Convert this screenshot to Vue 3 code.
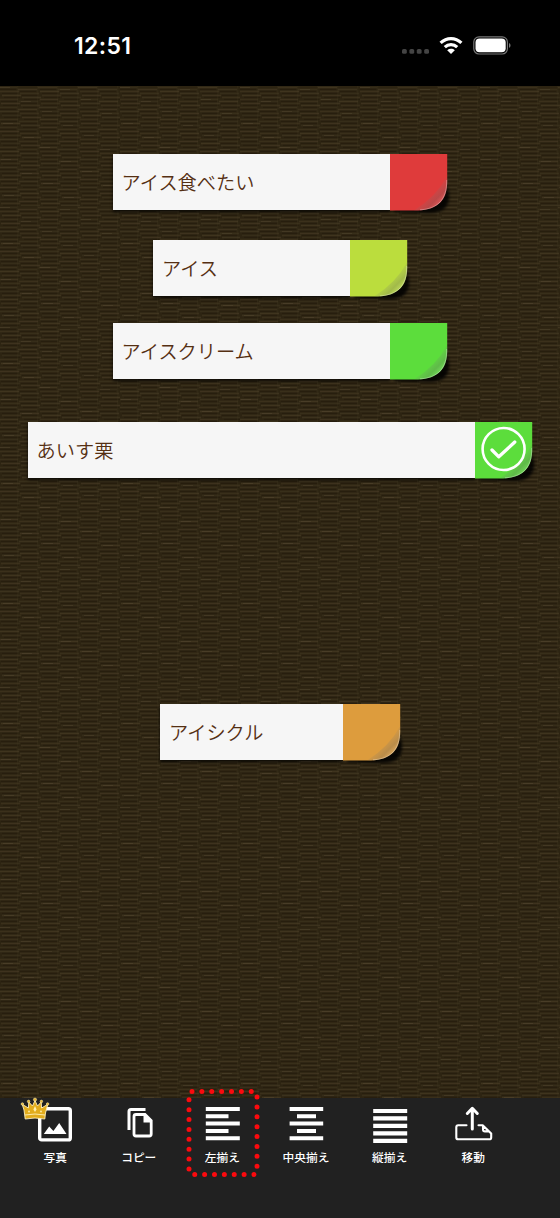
<script setup>
const notes = [
  { text: 'アイス食べたい', x: 112.6, y: 154, w: 334.6, color: '#df3b3b' },
  { text: 'アイス', x: 153, y: 239.5, w: 254, color: '#bbdd3d' },
  { text: 'アイスクリーム', x: 112.6, y: 322.8, w: 334.6, color: '#5cdd3c' },
  { text: 'あいす栗', x: 27.6, y: 421.8, w: 504.6, color: '#5cdd3c', checked: true },
  { text: 'アイシクル', x: 160, y: 703.6, w: 240, color: '#dd9c3d' },
]
const place = (n) => ({ left: n.x + 'px', top: n.y + 'px', width: n.w + 'px' })

const tools = [
  { id: 'photo', label: '写真' },
  { id: 'copy', label: 'コピー' },
  { id: 'left', label: '左揃え', active: true },
  { id: 'center', label: '中央揃え' },
  { id: 'justify', label: '縦揃え' },
  { id: 'move', label: '移動' },
]

// Strands of the woven mat: each 20px column is offset from its neighbour.
const strands = []
const glints = []
for (let c = 0; c < 6; c++) {
  for (let r = 0; r < 30; r++) {
    const x = c * 20 + ((r * 7) % 5) - 2
    const y = r * 4 + (c % 2) * 2
    strands.push({ x, y, o: 0.5 + ((r * 3 + c * 5) % 7) * 0.07 })
    if ((r * 5 + c * 3) % 9 === 0) glints.push({ x: x + 2, y: y + 1 })
  }
}
</script>

<template>
  <div class="screen">
    <header class="status">
      <span class="time">12:51</span>
      <div class="indicators">
        <svg class="dots" width="28" height="5" viewBox="0 0 28 5"><rect v-for="i in 4" :key="i" :x="(i - 1) * 7.4" y="0" width="4.8" height="4.8" rx="1.6" fill="#444" /></svg>
        <svg class="wifi" width="24" height="19" viewBox="0 0 24 19">
          <path d="M1.6 6.8C7.6 1.1 16.4 1.1 22.4 6.8M5.8 11.1C9.4 7.7 14.6 7.7 18.2 11.1" fill="none" stroke="#fff" stroke-width="3.2" />
          <path d="M12 18L8.2 14.2C10.4 12.4 13.6 12.4 15.8 14.2Z" fill="#fff" />
        </svg>
        <svg class="battery" width="38" height="19" viewBox="0 0 38 19">
          <rect x=".8" y=".8" width="33.6" height="17.2" rx="5.2" fill="none" stroke="#777" stroke-width="1.2" />
          <rect x="2.5" y="2.6" width="30.2" height="13.6" rx="4" fill="#fff" />
          <path d="M36 7c2 .8 2 4 0 4.8z" fill="#777" />
        </svg>
      </div>
    </header>

    <main class="board">
      <svg class="mat" width="560" height="1013">
        <defs>
          <pattern id="weave" width="120" height="120" patternUnits="userSpaceOnUse">
            <rect width="120" height="120" fill="#2d2412" />
            <path v-for="(s, i) in strands" :key="'s' + i" :d="`M${s.x} ${s.y + 1.5}h19`" stroke="#40351f" stroke-width="1.5" :opacity="s.o" />
            <path v-for="(s, i) in strands" :key="'d' + i" :d="`M${s.x + 2} ${s.y + 3.3}h16`" stroke="#21180a" stroke-width="1.1" opacity=".65" />
            <path v-for="(g, i) in glints" :key="'g' + i" :d="`M${g.x} ${g.y + .5}h10`" stroke="#5a4c34" stroke-width="1" opacity=".35" />
            <rect v-for="i in 6" :key="'c' + i" :x="i * 20 - 3" y="0" width="1.2" height="120" fill="#4a3e28" opacity=".18" />
          </pattern>
        </defs>
        <rect width="560" height="1013" fill="url(#weave)" />
      </svg>
    </main>

    <article v-for="(n, i) in notes" :key="n.text" class="note" :style="place(n)">
      <div class="paper">{{ n.text }}</div>
      <svg class="curl" width="70" height="70" viewBox="0 0 70 70">
        <defs>
          <linearGradient :id="'fold' + i" gradientUnits="userSpaceOnUse" x1="35" y1="34" x2="51" y2="50">
            <stop offset="0" stop-color="#777" stop-opacity="0" />
            <stop offset=".4" stop-color="#777" stop-opacity=".14" />
            <stop offset=".7" stop-color="#666" stop-opacity=".3" />
            <stop offset=".86" stop-color="#999" stop-opacity=".24" />
            <stop offset="1" stop-color="#ddd" stop-opacity=".3" />
          </linearGradient>
        </defs>
        <path class="shade" d="M4 53H33C47 52 54 46 57 31L59 40C60 53 53 59 39 59L4 58Z" />
        <path d="M0 0H57.2V28C57 46 48 55.6 28 56.4H0Z" :fill="n.color" />
        <path d="M57.2 22V28C57 46 48 55.6 28 56.4H24Q46 43 57.2 22Z" :fill="`url(#fold${i})`" />
        <path d="M56.7 26V28C56.5 45.5 47.6 55 30 55.8" fill="none" stroke="#fff" stroke-opacity=".3" stroke-width="1" />
        <g v-if="n.checked" fill="none" stroke="#fff">
          <circle cx="28.6" cy="27" r="21" stroke-width="2.6" />
          <path d="M17 28L23.8 34.8L39.8 20" stroke-width="3.3" stroke-linecap="round" stroke-linejoin="round" />
        </g>
      </svg>
    </article>

    <nav class="toolbar">
      <div v-for="t in tools" :key="t.id" class="tool">
        <svg class="icon" width="40" height="40" viewBox="0 0 40 40">
          <g v-if="t.id === 'photo'">
            <rect x="4.7" y="4.7" width="30.6" height="31.2" rx="2" fill="none" stroke="#fff" stroke-width="3.4" />
            <path d="M8.8 30L14.2 22.5L18.4 27L24.2 19L31.5 30Z" fill="#fff" />
          </g>
          <g v-else-if="t.id === 'copy'">
            <path d="M10 26V7.5Q10 5.5 12 5.5H26.5" fill="none" stroke="#fff" stroke-width="3" />
            <path d="M17 10.5H26L32.2 16.7V30Q32.2 32 30.2 32H17Q15 32 15 30V12.5Q15 10.5 17 10.5Z" fill="none" stroke="#fff" stroke-width="2.8" />
            <path d="M24.5 10V18.5H33Z" fill="#fff" />
          </g>
          <path v-else-if="t.id === 'left'" d="M3.8 5H37.8M3.8 12.2H26.5M3.8 19.6H37.8M3.8 26.9H26.5M3.8 34.2H37.8" stroke="#fff" stroke-width="4" />
          <path v-else-if="t.id === 'center'" d="M3.6 5H37.2M11 12.2H30M3.6 19.6H37.2M11 26.9H30M3.6 34.2H37.2" stroke="#fff" stroke-width="4" />
          <path v-else-if="t.id === 'justify'" d="M3.2 7H37.2M3.2 14.4H37.2M3.2 21.9H37.2M3.2 29.4H37.2M3.2 36.9H37.2" stroke="#fff" stroke-width="4.2" />
          <g v-else fill="none" stroke="#fff" stroke-width="2.1" stroke-linecap="round" stroke-linejoin="round">
            <path d="M13.5 21.3H5.2Q3.3 21.3 3.3 23.3V33.5Q3.3 35.3 5.2 35.3H36.2Q38.2 35.3 38.2 33.4V29.5L29.7 21.3H25.5M30 21.8V25.5Q30 27.4 32 27.4H35.8" />
            <path d="M19.3 25V5M14.3 9.5L19.3 4.3L24.3 9.5" stroke-width="3" />
          </g>
        </svg>
        <span class="label">{{ t.label }}</span>
        <svg v-if="t.id === 'photo'" class="crown" width="30" height="24" viewBox="0 0 30 24">
          <path d="M4 13L2.2 7.3L8.4 11L8.8 5L12.5 9L15 3.5L17.5 9L21.2 5L21.6 11L27.8 7.3L25.5 16L24.8 22Q15 20 5.2 22Z" fill="#e2ac1c" stroke="#fff1bd" stroke-width=".9" stroke-linejoin="round" />
          <g fill="#e5b633" stroke="#fff0b8" stroke-width=".5"><circle cx="2.4" cy="7" r="1.3" /><circle cx="8.6" cy="4.4" r="1.3" /><circle cx="15" cy="2.6" r="1.6" /><circle cx="21.4" cy="4.4" r="1.3" /><circle cx="27.6" cy="7" r="1.3" /></g>
          <path d="M5 18Q15 16 25 18" fill="none" stroke="#fff2ba" stroke-width=".9" />
          <path d="M15 9L16.6 12.5L15 15L13.4 12.5Z" fill="#fff0ab" /><circle cx="9" cy="14.5" r=".9" fill="#fff0ab" /><circle cx="21" cy="14.5" r=".9" fill="#fff0ab" />
        </svg>
        <svg v-if="t.active" class="marker" width="76" height="92" viewBox="0 0 76 92">
          <rect x="4" y="4.5" width="68" height="83" rx="3" pathLength="300" />
        </svg>
      </div>
    </nav>
  </div>
</template>

<style scoped>
.screen {
  position: relative;
  width: 560px;
  height: 1218px;
  display: flex;
  flex-direction: column;
  overflow: hidden;
  background: #212121;
  font-family: "Noto Sans CJK JP", sans-serif;
}
.status {
  box-sizing: border-box;
  height: 86px;
  flex: none;
  display: flex;
  justify-content: space-between;
  align-items: flex-start;
  padding: 31px 49px 0 74px;
  background: #000;
  color: #fff;
}
.time {
  font: 600 23px/30px Inter, sans-serif;
  letter-spacing: .35px;
}
.indicators { display: flex; align-items: center; padding-top: 5px; }
.dots { margin: 11px 9px 0 0; }
.wifi { margin-right: 10px; }
.board { height: 1012px; flex: none; overflow: hidden; }
.mat { display: block; }
.note { position: absolute; height: 56.4px; display: flex; }
.paper {
  box-sizing: border-box;
  flex: 1;
  padding-left: 9px;
  background: #f6f6f6;
  color: #552f12;
  font-size: 19.2px;
  font-weight: 350;
  line-height: 57px;
  white-space: nowrap;
  box-shadow: 0 2px 3px rgba(0, 0, 0, .75);
}
.curl { flex: none; margin-right: -12.8px; overflow: visible; }
.shade { fill: #000; opacity: .85; filter: blur(1.5px); }
.toolbar {
  height: 120px;
  flex: none;
  display: flex;
  padding-left: 13.4px;
  background: #212121;
}
.tool {
  position: relative;
  width: 83.6px;
  display: flex;
  flex-direction: column;
  align-items: center;
  padding-top: 6px;
}
.icon { display: block; }
.label {
  margin-top: 4px;
  color: #fff;
  font-size: 11.7px;
  font-weight: 500;
  line-height: 18px;
  white-space: nowrap;
}
.crown { position: absolute; left: 7px; top: -1px; }
.marker { position: absolute; left: 4px; top: -11px; }
.marker rect {
  fill: none;
  stroke: #fb0a0e;
  stroke-width: 5;
  stroke-linecap: round;
  stroke-dasharray: 0 10;
}
</style>

<style>
html, body { background: #000; }
</style>
